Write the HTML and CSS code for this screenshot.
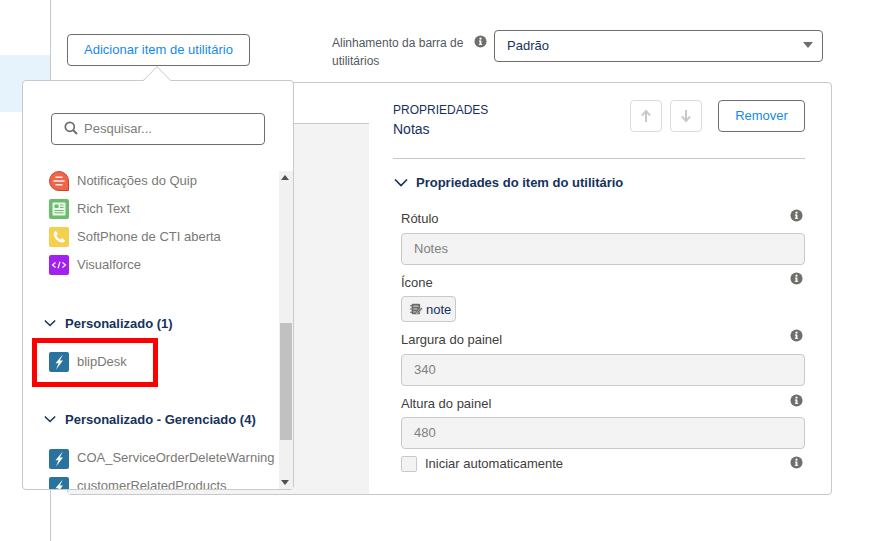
FILE: index.html
```html
<!DOCTYPE html>
<html lang="pt-BR">
<head>
<meta charset="utf-8">
<title>Itens de utilitário</title>
<link rel="stylesheet" href="styles.css">
</head>
<body>
<div class="page">
  <aside class="rail"><div class="rail-active"></div></aside>
  <main class="main">
    <div class="toolbar">
      <button class="btn btn-add">Adicionar item de utilitário</button>
      <div class="align-label">Alinhamento da barra de utilitários</div>
      <svg class="info info-top" viewBox="0 0 14 14"><use href="#i"/></svg>
      <div class="select"><span>Padrão</span><i class="select-caret"></i></div>
    </div>
    <section class="panel">
      <div class="panel-left"><div class="panel-left-head"></div><div class="panel-left-body"></div></div>
      <div class="panel-right">
        <header class="props-head">
          <div class="props-title">
            <div class="props-over">PROPRIEDADES</div>
            <div class="props-name">Notas</div>
          </div>
          <button class="icon-btn" aria-label="Mover para cima"><svg viewBox="0 0 14 14" width="14" height="14"><path d="M7 13V2.500M2.800 6.600L7 2l4.200 4.600" fill="none" stroke="#c9c9c9" stroke-width="2"/></svg></button>
          <button class="icon-btn icon-btn-next" aria-label="Mover para baixo"><svg viewBox="0 0 14 14" width="14" height="14"><path d="M7 1v10.500M2.800 7.400L7 12l4.200-4.600" fill="none" stroke="#c9c9c9" stroke-width="2"/></svg></button>
          <button class="btn btn-remove">Remover</button>
        </header>
        <div class="section-head">
          <svg class="chev" viewBox="0 0 14 9"><path d="M1 1.500l6 6 6-6" fill="none" stroke="#16325c" stroke-width="1.700"/></svg>
          <span>Propriedades do item do utilitário</span>
        </div>
        <div class="fields">
          <div class="field-label field-first"><span>Rótulo</span><svg class="info" viewBox="0 0 14 14"><use href="#i"/></svg></div>
          <div class="input">Notes</div>
          <div class="field-label field-icon"><span>Ícone</span><svg class="info" viewBox="0 0 14 14"><use href="#i"/></svg></div>
          <div class="chip">
            <svg class="note-icon" viewBox="0 0 16 14"><rect x="2" y=".5" width="10.500" height="13" rx="1.500" fill="#6b6b6b"/><path d="M0 3h3M0 7h3M0 11h3" stroke="#6b6b6b" stroke-width="1.500"/><path d="M4 3.500h6.500M4 7h5M4 10.500h3" stroke="#f3f3f3" stroke-width="1"/><path d="M8 12.800l.6-2.300 5.200-5.400 1.700 1.600-5.300 5.400z" fill="#6b6b6b" stroke="#f3f3f3" stroke-width=".6"/></svg>
            <span>note</span>
          </div>
          <div class="field-label field-w"><span>Largura do painel</span><svg class="info" viewBox="0 0 14 14"><use href="#i"/></svg></div>
          <div class="input">340</div>
          <div class="field-label field-h"><span>Altura do painel</span><svg class="info" viewBox="0 0 14 14"><use href="#i"/></svg></div>
          <div class="input input-tight">480</div>
          <div class="check-row">
            <i class="checkbox"></i>
            <span class="check-label">Iniciar automaticamente</span>
            <svg class="info" viewBox="0 0 14 14"><use href="#i"/></svg>
          </div>
        </div>
      </div>
    </section>
  </main>
</div>

<svg class="defs" width="0" height="0"><defs>
  <g id="i"><circle cx="7" cy="7" r="6.500"/><rect x="6" y="6" width="2" height="4.600" fill="#fff"/><rect x="5.200" y="9.600" width="3.600" height="1" fill="#fff"/><rect x="5.200" y="6" width="2" height="1" fill="#fff"/><circle cx="7" cy="4" r="1.200" fill="#fff"/></g>
  <g id="bolt"><rect width="20" height="20" rx="2" fill="#2a739e"/><path d="M13.800 2.500L6.500 11.200h3.100L7 17.500l7-9h-3.100l2.900-6z" fill="#fff"/></g>
</defs></svg>

<div class="popover">
  <div class="nub"></div>
  <div class="search">
    <svg class="search-icon" viewBox="0 0 14 14"><circle cx="5.800" cy="5.800" r="4.500" fill="none" stroke="#706e6b" stroke-width="1.700"/><path d="M9 9l4 4" stroke="#706e6b" stroke-width="1.900"/></svg>
    <span>Pesquisar...</span>
  </div>
  <div class="list-wrap">
    <div class="list">
      <div class="item">
        <svg class="ico" viewBox="0 0 20 20"><path d="M10 .5a9.500 9.500 0 1 0 0 19h9.500V10A9.500 9.500 0 0 0 10 .5z" fill="#f0654a" stroke="#c8452c"/><path d="M6.500 6.300h7M4.500 10h11M6.500 13.700h7" stroke="#fff" stroke-opacity=".9" stroke-width="1.500"/></svg>
        <span>Notificações do Quip</span>
      </div>
      <div class="item">
        <svg class="ico" viewBox="0 0 20 20"><rect width="20" height="20" rx="2" fill="#6bbd6e"/><rect x="3.500" y="3.500" width="13" height="13" rx="1" fill="#eaf6ea"/><rect x="5.500" y="5.500" width="4" height="3.500" fill="#6bbd6e"/><path d="M11 6h3.500M11 8.500h3.500M5.500 11.500h9M5.500 13.800h9" stroke="#6bbd6e"/></svg>
        <span>Rich Text</span>
      </div>
      <div class="item">
        <svg class="ico" viewBox="0 0 20 20"><rect width="20" height="20" rx="2" fill="#f4d04f"/><path d="M6.800 4c-.5 0-2 1-2.100 2.300C4.500 11 9.500 15.800 13.800 15.500c1.300-.1 2.200-1.500 2.200-2 0-.4-2.800-2.300-3.300-2.300-.5 0-1 1.200-1.500 1.100-1.300-.2-3.800-2.800-3.800-3.900 0-.5 1.200-1 1.200-1.500C8.600 6.400 7.300 4 6.800 4z" fill="#fff"/></svg>
        <span>SoftPhone de CTI aberta</span>
      </div>
      <div class="item">
        <svg class="ico" viewBox="0 0 20 20"><rect width="20" height="20" rx="2" fill="#a321ee"/><path d="M6.500 7.500L3.500 10l3 2.500M13.500 7.500l3 2.500-3 2.500M11 6.800L9 13.200" fill="none" stroke="#fff" stroke-width="1.200"/></svg>
        <span>Visualforce</span>
      </div>
      <div class="group-head group-first">
        <svg class="chev" viewBox="0 0 14 9"><path d="M1 1.500l6 6 6-6" fill="none" stroke="#16325c" stroke-width="1.700"/></svg>
        <span>Personalizado (1)</span>
      </div>
      <div class="item item-group"><svg class="ico" viewBox="0 0 20 20"><use href="#bolt"/></svg><span>blipDesk</span></div>
      <div class="group-head group-second">
        <svg class="chev" viewBox="0 0 14 9"><path d="M1 1.500l6 6 6-6" fill="none" stroke="#16325c" stroke-width="1.700"/></svg>
        <span>Personalizado - Gerenciado (4)</span>
      </div>
      <div class="item item-group2 item-high"><svg class="ico" viewBox="0 0 20 20"><use href="#bolt"/></svg><span>COA_ServiceOrderDeleteWarning</span></div>
      <div class="item item-high"><svg class="ico" viewBox="0 0 20 20"><use href="#bolt"/></svg><span>customerRelatedProducts</span></div>
    </div>
    <div class="scrollbar">
      <i class="arrow-up"></i>
      <div class="thumb"></div>
      <i class="arrow-down"></i>
    </div>
  </div>
</div>
<div class="highlight"></div>
</body>
</html>
```

FILE: styles.css
```css
* { box-sizing: border-box; }
html, body { margin: 0; padding: 0; height: 100%; overflow: hidden; background: #fff; }
body { font-family: "Liberation Sans", Arial, sans-serif; font-size: 13px; color: #16325c; position: relative; }
button { font-family: inherit; margin: 0; cursor: pointer; }
.defs { position: absolute; }

.page { display: flex; height: 541px; }
.rail { width: 51px; flex: none; border-right: 1px solid #c9c9c9; padding-top: 55px; }
.rail-active { height: 57px; background: #e6f3fc; }
.main { flex: none; width: 781px; padding: 30px 0 0 16px; }

.toolbar { display: flex; align-items: flex-start; height: 52px; }
.btn { height: 32px; padding: 0 0 2px; background: #fff; border: 1px solid #706e6b; border-radius: 4px; color: #1589ee; font-size: 13px; }
.btn-add { width: 183px; margin: 4px 82px 0 0; }
.align-label { width: 141px; margin-top: 4px; font-size: 12px; line-height: 18px; color: #54585e; }
.info { width: 13px; height: 13px; fill: #706e6b; flex: none; }
.info-top { margin: 5px 0 0 1px; }
.select { width: 329px; height: 32px; margin-left: 7px; display: flex; align-items: center; justify-content: space-between; padding: 0 9px 2px 12px; border: 1px solid #706e6b; border-radius: 4px; font-size: 13px; color: #16325c; }
.select-caret { width: 0; height: 0; border: 5px solid transparent; border-top: 6px solid #706e6b; border-bottom: 0; }

.panel { display: flex; height: 413px; width: 765px; border: 1px solid #c9c9c9; border-radius: 4px; }
.panel-left { width: 301px; flex: none; display: flex; flex-direction: column; }
.panel-left-head { height: 41px; border-bottom: 1px solid #c9c9c9; }
.panel-left-body { flex: 1; background: #f3f3f3; }
.panel-right { flex: 1; padding: 17px 26px 0 24px; }

.props-head { display: flex; height: 59px; border-bottom: 1px solid #c9c9c9; }
.props-title { flex: 1; padding-top: 3px; }
.props-over { font-size: 12px; line-height: 14px; color: #16325c; }
.props-name { font-size: 14px; line-height: 16px; margin-top: 4px; color: #16325c; }
.icon-btn { width: 32px; height: 32px; padding: 0; display: flex; align-items: center; justify-content: center; background: #fff; border: 1px solid #dddbda; border-radius: 4px; }
.icon-btn-next { margin-left: 8px; }
.btn-remove { width: 87px; margin-left: 16px; }

.section-head { display: flex; align-items: center; height: 16px; margin-top: 15px; font-weight: 700; font-size: 13px; color: #16325c; }
.chev { width: 14px; height: 9px; flex: none; margin-left: 1px; }
.section-head span { margin-left: 8px; }

.fields { padding-left: 8px; }
.field-label { display: flex; justify-content: space-between; align-items: flex-start; height: 18px; line-height: 18px; font-size: 13px; color: #3e3e3c; }
.field-label .info { margin-top: -1px; margin-right: 2px; }
.field-icon .info, .field-w .info { margin-top: -2px; }
.field-first { margin-top: 20px; }
.field-label + .input { margin-top: 5px; }
.field-label + .input-tight { margin-top: 4px; }
.field-icon { margin-top: 9px; }
.field-w { margin-top: 9px; }
.field-h { margin-top: 9px; }
.input { height: 32px; padding-left: 12px; line-height: 30px; font-size: 13px; color: #80807e; background: #f3f3f3; border: 1px solid #c9c9c9; border-radius: 4px; }
.chip { display: flex; align-items: center; height: 26px; width: 55px; margin-top: 4px; padding-left: 8px; background: #f3f3f3; border: 1px solid #c9c9c9; border-radius: 4px; font-size: 13px; color: #16325c; }
.note-icon { width: 13px; height: 12px; margin-right: 3px; flex: none; }
.check-row { display: flex; align-items: flex-start; height: 16px; margin-top: 7px; font-size: 13px; line-height: 15px; color: #3e3e3c; }
.checkbox { width: 16px; height: 16px; background: #f3f3f3; border: 1px solid #c9c9c9; border-radius: 2px; flex: none; }
.check-label { flex: 1; margin-left: 8px; }
.check-row .info { margin-right: 2px; }

.popover { position: absolute; left: 22px; top: 80px; width: 272px; height: 410px; background: #fff; border: 1px solid #c9c9c9; border-radius: 4px; padding-top: 32px; }
.nub { position: absolute; left: 124px; top: -11px; width: 20px; height: 20px; background: #fff; border: 1px solid #c9c9c9; border-right: 0; border-bottom: 0; transform: rotate(45deg); clip-path: polygon(0 0, 100% 0, 100% 10%, 10% 100%, 0 100%); }
.search { display: flex; align-items: center; width: 214px; height: 32px; margin-left: 28px; padding: 0 0 2px 12px; border: 1px solid #706e6b; border-radius: 4px; font-size: 13px; color: #7d7d7b; }
.search-icon { width: 14px; height: 14px; margin-right: 6px; flex: none; }

.list-wrap { position: relative; display: flex; height: 318px; margin-top: 26px; overflow: hidden; }
.list { flex: 1; display: flex; flex-direction: column; padding-left: 26px; overflow: hidden; }
.item { display: flex; align-items: flex-start; flex: none; height: 20px; margin-bottom: 8px; font-size: 13px; line-height: 20px; color: #7a7876; white-space: nowrap; }
.item-high { line-height: 18px; }
.ico { width: 20px; height: 20px; flex: none; margin-right: 8px; }
.group-head { display: flex; align-items: center; flex: none; height: 16px; margin-left: -5px; font-weight: 700; font-size: 13px; color: #16325c; white-space: nowrap; }
.group-head .chev { width: 12px; height: 8px; margin: 0; }
.group-head span { margin-left: 9px; }
.group-first { margin-top: 32px; }
.item-group { margin-top: 21px; }
.group-second { margin-top: 31px; }
.item-group2 { margin-top: 22px; }

.scrollbar { position: relative; width: 14px; flex: none; background: #f1f1f1; }
.thumb { position: absolute; left: 1px; right: 1px; top: 152px; height: 117px; background: #c1c1c1; }
.arrow-up, .arrow-down { position: absolute; left: 2px; width: 0; height: 0; border: 4px solid transparent; }
.arrow-up { top: 4px; border-top: 0; border-bottom: 5px solid #505050; }
.arrow-down { bottom: 4px; border-bottom: 0; border-top: 5px solid #505050; }

.highlight { position: absolute; left: 32px; top: 338px; width: 126px; height: 49px; border: 5px solid #ff0000; }
```
